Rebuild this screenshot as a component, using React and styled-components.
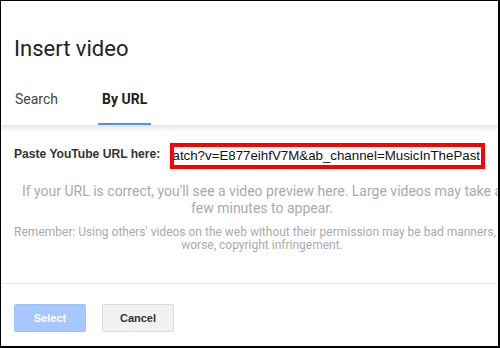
import React from "react";
import styled, { createGlobalStyle } from "styled-components";

const Global = createGlobalStyle`
  html, body { margin: 0; padding: 0; background: #fff; }
  * { box-sizing: border-box; }
`;

const Dialog = styled.div`
  width: 500px;
  height: 348px;
  border-style: solid;
  border-color: #000;
  border-width: 1px 2px 2px 1px;
  background: #fff;
  overflow: hidden;
  display: flex;
  flex-direction: column;
`;

const Title = styled.h1`
  margin: 35px 0 0;
  padding-left: 13px;
  font-family: Roboto, "Liberation Sans", sans-serif;
  font-weight: 400;
  font-size: 22px;
  line-height: 26px;
  color: #222;
`;

const Tabs = styled.div`
  display: flex;
  gap: 36px;
  margin-top: 29px;
  padding-left: 10px;
`;

const Tab = styled.div`
  padding: 0 4px 16px;
  border-bottom: 2px solid ${(p) => (p.$active ? "#4d90fe" : "transparent")};
  font-family: Roboto, "Liberation Sans", sans-serif;
  font-size: 14px;
  line-height: 16px;
  font-weight: ${(p) => (p.$active ? 700 : 400)};
  color: ${(p) => (p.$active ? "#222" : "#444")};
`;

const Body = styled.div`
  flex: 1;
  padding: 18px 13px 0;
  background: linear-gradient(#e6e6e6, #fafafa 5px, #fff 8px);
`;

const UrlRow = styled.div`
  display: flex;
  align-items: flex-start;
  gap: 7px;
`;

const Label = styled.label`
  flex: 0 0 149px;
  padding-top: 4px;
  font-family: "Liberation Sans", Arial, sans-serif;
  font-weight: 700;
  font-size: 12.1px;
  line-height: 14px;
  color: #333;
  white-space: nowrap;
`;

const UrlBox = styled.div`
  width: 316px;
  height: 26px;
  border: 4px solid #ff0000;
  display: flex;
  justify-content: flex-end;
  overflow: hidden;
  padding-right: 1px;
  font-family: "Liberation Sans", Arial, sans-serif;
  font-size: 13.3px;
  line-height: 18px;
  color: #111;
  white-space: nowrap;
`;

const Note = styled.p`
  width: 496px;
  margin: ${(p) => p.$mt}px 0 0;
  text-align: center;
  font-family: Roboto, "Liberation Sans", sans-serif;
  font-size: ${(p) => p.$size}px;
  line-height: ${(p) => p.$lh}px;
  color: #aaa;
`;

const Footer = styled.div`
  flex-shrink: 0;
  height: 63px;
  border-top: 1px solid #e5e5e5;
  padding: 20px 13px 0;
  display: flex;
  gap: 16px;
`;

const Button = styled.button`
  width: 72px;
  height: 28px;
  border-radius: 2px;
  border: 1px solid ${(p) => (p.$primary ? "#9fc1fb" : "#dcdcdc")};
  background: ${(p) => (p.$primary ? "#a6c8ff" : "#f1f1f1")};
  color: ${(p) => (p.$primary ? "#fff" : "#333")};
  font-family: "Liberation Sans", Arial, sans-serif;
  font-weight: 700;
  font-size: 11px;
  padding: 0;
`;

export default function App() {
  return (
    <>
      <Global />
      <Dialog>
        <Title>Insert video</Title>
        <Tabs>
          <Tab>Search</Tab>
          <Tab $active>By URL</Tab>
        </Tabs>
        <Body>
          <UrlRow>
            <Label>Paste YouTube URL here:</Label>
            <UrlBox>
              <span>https://www.youtube.com/watch?v=E877eihfV7M&amp;ab_channel=MusicInThePast</span>
            </UrlBox>
          </UrlRow>
          <Note $mt={14} $size={14} $lh={17}>
            If your URL is correct, you'll see a video preview here. Large videos may take a few minutes to appear.
          </Note>
          <Note $mt={9} $size={12} $lh={13}>
            Remember: Using others' videos on the web without their permission may be bad manners, or worse, copyright infringement.
          </Note>
        </Body>
        <Footer>
          <Button $primary>Select</Button>
          <Button>Cancel</Button>
        </Footer>
      </Dialog>
    </>
  );
}
